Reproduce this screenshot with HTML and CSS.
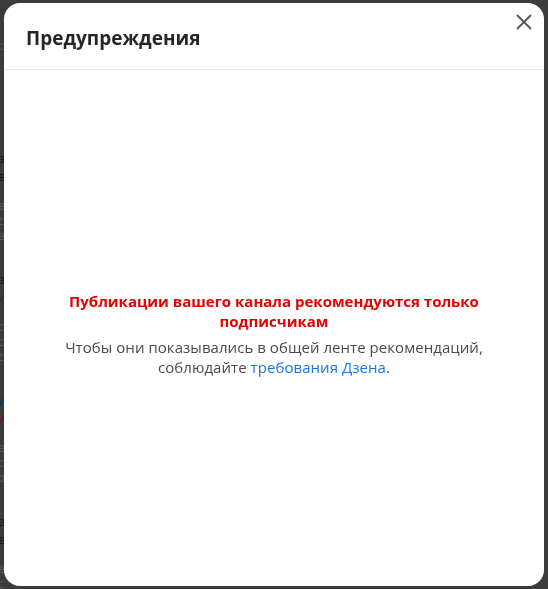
FILE: index.html
```html
<!DOCTYPE html>
<html lang="ru">
<head>
<meta charset="utf-8">
<link rel="stylesheet" href="styles.css">
</head>
<body>
<div class="page">
  <div class="lead">с</div>
  <div class="cards">
    <div class="card">
      <div class="t">а</div><div class="t">в</div>
      <div class="meta"><span>е</span><span>с</span><span>е</span></div>
    </div>
    <div class="card">
      <div class="t">а</div><div class="t gold">и</div>
      <div class="meta"><span>с</span><span>с</span><span>с</span></div>
    </div>
    <div class="card">
      <div class="t blue">и</div><div class="t red">и</div>
      <div class="meta"><span>е</span><span>с</span><span>о</span></div>
    </div>
    <div class="card">
      <div class="t">а</div><div class="t">в</div>
      <div class="meta"><span>е</span><span>с</span><span>е</span></div>
    </div>
  </div>
</div>
<div class="overlay">
  <div class="modal">
    <div class="modal-header">
      <h2 class="modal-title">Предупреждения</h2>
      <button class="close" aria-label="Закрыть">
        <svg width="16" height="16" viewBox="0 0 16 16"><path d="M1.5 1.5 L14.5 14.5 M14.5 1.5 L1.5 14.5" stroke="#555" stroke-width="1.8" stroke-linecap="round" fill="none"/></svg>
      </button>
    </div>
    <div class="modal-body">
      <div class="warning">
        <p class="warning-title">Публикации вашего канала рекомендуются только подписчикам</p>
        <p class="warning-text">Чтобы они показывались в общей ленте рекомендаций, соблюдайте <a href="#" class="link">требования Дзена</a>.</p>
      </div>
    </div>
  </div>
</div>
</body>
</html>
```
FILE: styles.css
```css
html, body {
  margin: 0;
  padding: 0;
  height: 100%;
}
body {
  background: #3b3b3b;
  font-family: "Open Sans", "Noto Sans", sans-serif;
  overflow: hidden;
}
.page {
  padding-top: 36px;
  margin-left: -2px;
  color: #151515;
  font-size: 13px;
}
.lead {
  line-height: 18px;
  color: #555;
}
.cards {
  margin-top: 95px;
  display: flex;
  flex-direction: column;
  gap: 27px;
}
.card {
  display: flex;
  flex-direction: column;
}
.t {
  line-height: 18px;
  color: #151515;
}
.t.gold { color: #3a2c05; }
.t.blue { color: #0d2a66; }
.t.red { color: #6a0d18; }
.meta {
  margin-top: 13px;
  display: flex;
  flex-direction: column;
  line-height: 15px;
  font-size: 12px;
  color: #5a5a5a;
}
.overlay {
  position: fixed;
  inset: 0;
  padding: 3px 4px;
  display: flex;
}
.modal {
  flex: 1;
  background: #fff;
  border-radius: 16px;
  display: flex;
  flex-direction: column;
  overflow: hidden;
}
.modal-header {
  display: flex;
  align-items: flex-start;
  justify-content: space-between;
  border-bottom: 1px solid #e6e6e6;
  height: 67px;
  box-sizing: border-box;
}
.modal-title {
  margin: 0;
  padding: 22px 0 0 22px;
  font-size: 19px;
  line-height: 26px;
  font-weight: 700;
  color: #262626;
}
.close {
  border: 0;
  background: none;
  padding: 0;
  margin: 11px 12px 0 0;
  width: 16px;
  height: 16px;
  cursor: pointer;
}
.close svg { display: block; }
.modal-body {
  flex: 1;
  display: flex;
  align-items: center;
  justify-content: center;
  padding: 12px 40px 0 40px;
}
.warning {
  text-align: center;
  max-width: 430px;
}
.warning-title {
  margin: 0 0 6px;
  color: #e60000;
  font-weight: 700;
  font-size: 15px;
  line-height: 20px;
}
.warning-text {
  margin: 0;
  color: #4a4a4a;
  font-size: 15px;
  line-height: 20px;
  letter-spacing: 0.05px;
}
.link {
  color: #1a75e0;
  text-decoration: none;
}
```
